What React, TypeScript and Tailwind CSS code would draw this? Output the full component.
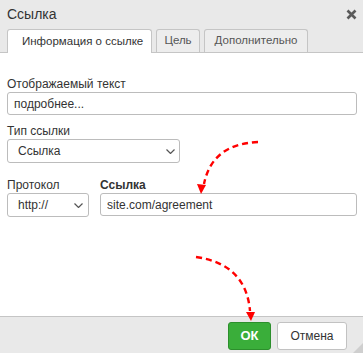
import React from "react";

function Chevron() {
  return (
    <svg width="9" height="5" viewBox="0 0 9 5" className="shrink-0">
      <path d="M0.5 0.5l4 4 4-4" fill="none" stroke="#555" strokeWidth="1.2" />
    </svg>
  );
}

function Arrows() {
  return (
    <svg className="pointer-events-none absolute inset-0" width="363" height="353" viewBox="0 0 363 353">
      <path d="M258 142 Q212 144 204 184" fill="none" stroke="#ff0000" strokeWidth="2.4" strokeDasharray="6 4" />
      <path d="M197 184 L206 185 L201 194 Z" fill="#ff0000" />
      <path d="M196 257 Q246 264 250 311" fill="none" stroke="#ff0000" strokeWidth="2.4" strokeDasharray="6 4" />
      <path d="M246 312 L255 312 L251 321 Z" fill="#ff0000" />
    </svg>
  );
}

export default function App() {
  return (
    <div
      className="relative flex h-[353px] w-[363px] flex-col overflow-hidden bg-white text-[12px] text-[#333]"
      style={{ fontFamily: "'Liberation Sans', Arial, sans-serif" }}
    >
      {/* Header */}
      <div className="border-b border-[#c5c5c5] bg-[#e9e9e9]">
        <div className="flex h-[28px] items-center justify-between pl-[7px] pr-[6px]">
          <span className="text-[14px] text-[#333]">Ссылка</span>
          <svg width="11" height="11" viewBox="0 0 11 11">
            <path d="M1.5 1.5l8 8M9.5 1.5l-8 8" stroke="#5a5a5a" strokeWidth="2.6" />
          </svg>
        </div>
        <div className="flex gap-[4px] pl-[7px] pt-[1px] text-[11.5px]">
          <div className="-mb-px flex h-[24px] w-[145px] items-center rounded-t-[3px] border border-b-0 border-[#c5c5c5] bg-white pl-[14px]">
            Информация о ссылке
          </div>
          <div className="flex h-[23px] w-[44px] items-center justify-center rounded-t-[3px] border border-b-0 border-[#c5c5c5] bg-[#ededed] text-[#555]">
            Цель
          </div>
          <div className="flex h-[23px] w-[104px] items-center justify-center rounded-t-[3px] border border-b-0 border-[#c5c5c5] bg-[#ededed] text-[#555]">
            Дополнительно
          </div>
        </div>
      </div>

      {/* Body */}
      <div className="flex-1 px-[7px] pt-[24px]">
        <div className="leading-[15px]">Отображаемый текст</div>
        <div className="flex h-[23px] w-[350px] items-center rounded-[3px] border border-[#bcbcbc] px-[6px]">
          подробнее...
        </div>

        <div className="mt-[9px] leading-[15px]">Тип ссылки</div>
        <div className="flex h-[24px] w-[173px] items-center justify-between rounded-[3px] border border-[#bcbcbc] pl-[10px] pr-[4px]">
          <span>Ссылка</span>
          <Chevron />
        </div>

        <div className="mt-[15px] flex gap-[11px]">
          <div>
            <div className="leading-[15px]">Протокол</div>
            <div className="flex h-[24px] w-[82px] items-center justify-between rounded-[3px] border border-[#bcbcbc] pl-[10px] pr-[5px]">
              <span>http://</span>
              <Chevron />
            </div>
          </div>
          <div>
            <div className="font-bold leading-[15px]">Ссылка</div>
            <div className="flex h-[23px] w-[257px] items-center rounded-[3px] border border-[#bcbcbc] px-[6px]">
              site.com/agreement
            </div>
          </div>
        </div>
      </div>

      {/* Footer */}
      <div className="relative flex h-[37px] items-start justify-end gap-[6px] border-t border-[#c5c5c5] bg-[#e9e9e9] pr-[16px] pt-[5px]">
        <div className="flex h-[28px] w-[43px] items-center justify-center rounded-[3px] border border-[#2c8f2c] bg-[#3aae3a] text-[13px] font-bold text-white">
          ОК
        </div>
        <div className="flex h-[28px] w-[70px] items-center justify-center rounded-[3px] border border-[#c2c2c2] bg-white text-[#333]">
          Отмена
        </div>
        <svg className="absolute bottom-0 right-0" width="10" height="10" viewBox="0 0 10 10">
          <path d="M10 0 L10 10 L0 10 Z" fill="#cfcfcf" />
        </svg>
      </div>

      <Arrows />
    </div>
  );
}
